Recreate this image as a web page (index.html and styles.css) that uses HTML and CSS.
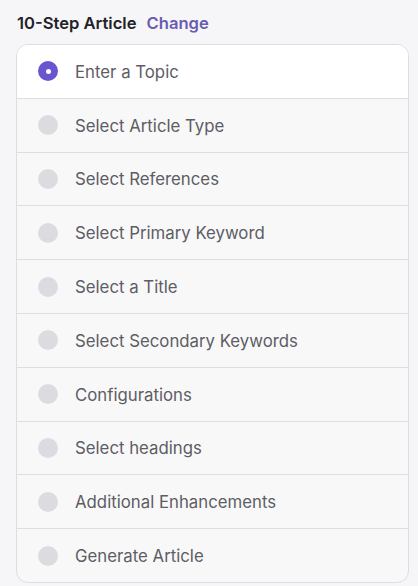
FILE: index.html
```html
<!DOCTYPE html>
<html>
<head>
<meta charset="utf-8">
<link rel="stylesheet" href="styles.css">
</head>
<body>
<div class="wrap">
  <div class="header">
    <span class="title">10-Step Article</span>
    <span class="change">Change</span>
  </div>
  <div class="card">
    <div class="step active"><span class="dot"></span><span class="label">Enter a Topic</span></div>
    <div class="step"><span class="dot"></span><span class="label">Select Article Type</span></div>
    <div class="step"><span class="dot"></span><span class="label">Select References</span></div>
    <div class="step"><span class="dot"></span><span class="label">Select Primary Keyword</span></div>
    <div class="step"><span class="dot"></span><span class="label">Select a Title</span></div>
    <div class="step"><span class="dot"></span><span class="label">Select Secondary Keywords</span></div>
    <div class="step"><span class="dot"></span><span class="label">Configurations</span></div>
    <div class="step"><span class="dot"></span><span class="label">Select headings</span></div>
    <div class="step"><span class="dot"></span><span class="label">Additional Enhancements</span></div>
    <div class="step"><span class="dot"></span><span class="label">Generate Article</span></div>
  </div>
</div>
</body>
</html>
```

FILE: styles.css
```css
html, body {
  margin: 0;
  padding: 0;
  background: #f6f6f8;
  font-family: Inter, "Noto Sans", sans-serif;
}
.wrap {
  padding: 12px 9px 0 16px;
}
.header {
  display: flex;
  align-items: center;
  gap: 10px;
  height: 21px;
  padding-left: 1px;
  margin-bottom: 11px;
}
.title {
  font-size: 16.6px;
  font-weight: 600;
  color: #222228;
}
.change {
  font-size: 16.6px;
  font-weight: 600;
  color: #6a5cb0;
}
.card {
  border: 1px solid #dedee2;
  border-radius: 12px;
  overflow: hidden;
  background: #f8f8f9;
}
.step {
  display: flex;
  align-items: center;
  height: 52.8px;
  padding-left: 21px;
  gap: 17px;
  border-top: 1px solid #dedee2;
}
.step:first-child {
  border-top: none;
  background: #ffffff;
}
.dot {
  width: 20px;
  height: 20px;
  border-radius: 50%;
  background: #dcdce0;
  display: flex;
  align-items: center;
  justify-content: center;
  flex: none;
}
.active .dot {
  background: #6a55cf;
}
.active .dot::after {
  content: "";
  width: 5px;
  height: 5px;
  border-radius: 50%;
  background: #fff;
}
.label {
  font-size: 16.8px;
  color: #5d5d64;
  padding-top: 1px;
}
```
